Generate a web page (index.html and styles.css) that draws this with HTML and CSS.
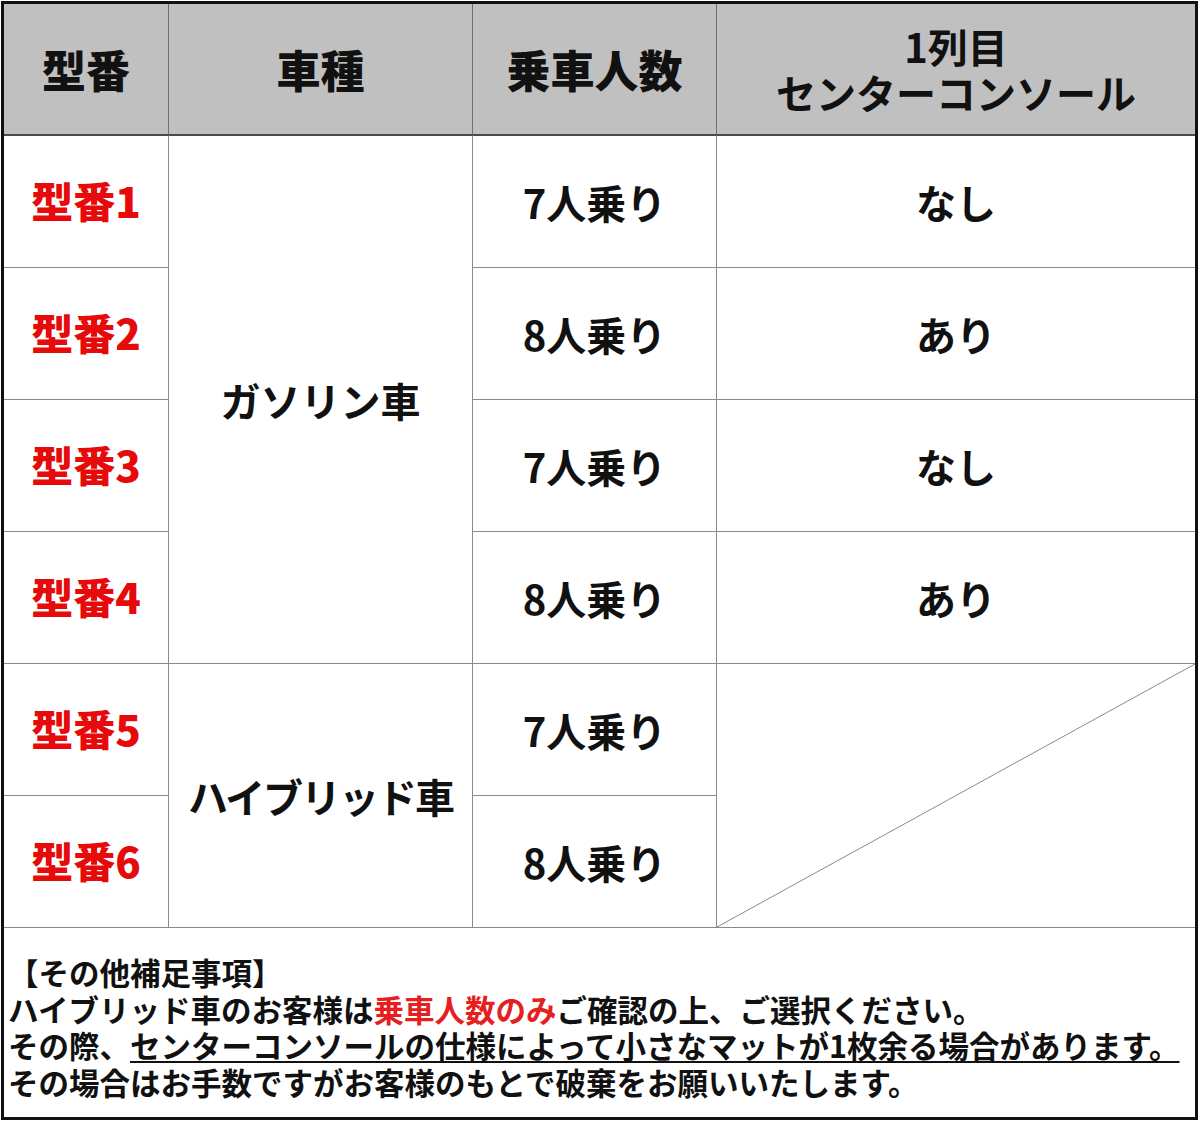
FILE: index.html
```html
<!DOCTYPE html>
<html lang="ja">
<head>
<meta charset="utf-8">
<title>型番一覧</title>
<link rel="stylesheet" href="styles.css">
</head>
<body>
<div class="sheet">
  <div class="grid">
    <div class="cell head heavy">型番</div>
    <div class="cell head heavy">車種</div>
    <div class="cell head heavy">乗車人数</div>
    <div class="cell head last two-line"><span>1列目</span><span>センターコンソール</span></div>

    <div class="cell model">型番1</div>
    <div class="cell type span4">ガソリン車</div>
    <div class="cell seat">7人乗り</div>
    <div class="cell seat last">なし</div>

    <div class="cell model">型番2</div>
    <div class="cell seat">8人乗り</div>
    <div class="cell seat last">あり</div>

    <div class="cell model">型番3</div>
    <div class="cell seat">7人乗り</div>
    <div class="cell seat last">なし</div>

    <div class="cell model">型番4</div>
    <div class="cell seat">8人乗り</div>
    <div class="cell seat last">あり</div>

    <div class="cell model">型番5</div>
    <div class="cell type span2 hybrid">ハイブリッド車</div>
    <div class="cell seat">7人乗り</div>
    <div class="cell last span2 diag">
      <svg class="diag-line" viewBox="0 0 100 100" preserveAspectRatio="none" aria-hidden="true">
        <line x1="0" y1="100" x2="100" y2="0" stroke="#8a8a8a" stroke-width="1" vector-effect="non-scaling-stroke"/>
      </svg>
    </div>

    <div class="cell model">型番6</div>
    <div class="cell seat">8人乗り</div>

    <div class="notes">
      <p>【その他補足事項】</p>
      <p>ハイブリッド車のお客様は<span class="red">乗車人数のみ</span>ご確認の上、ご選択ください。</p>
      <p>その際、<span class="ul">センターコンソールの仕様によって小さなマットが1枚余る場合があります。</span></p>
      <p>その場合はお手数ですがお客様のもとで破棄をお願いいたします。</p>
    </div>
  </div>
</div>
</body>
</html>
```

FILE: styles.css
```css
html, body {
  margin: 0;
  padding: 0;
  background: #ffffff;
}

body {
  font-family: "Noto Sans CJK JP", "Noto Sans", sans-serif;
  color: #111111;
}

.sheet {
  margin: 1px 0 0 1px;
  width: 1191px;
  height: 1113px;
  border: 3px solid #111111;
}

.grid {
  display: grid;
  grid-template-columns: 165px 304px 244px 1fr;
  grid-template-rows: 132px repeat(6, 132px) 1fr;
  height: 100%;
}

.cell {
  box-sizing: border-box;
  border-right: 1px solid #8a8a8a;
  border-bottom: 1px solid #8a8a8a;
  display: flex;
  align-items: center;
  justify-content: center;
  text-align: center;
  font-size: 40px;
  font-weight: 700;
  line-height: 1.2;
}

.cell.last {
  border-right: none;
}

.head {
  background: #c0c0c0;
  border-bottom: 2px solid #4a4a4a;
  border-right-color: #6f6f6f;
}

.heavy {
  font-size: 44px;
  font-weight: 900;
}

.two-line {
  flex-direction: column;
  font-size: 40px;
  font-weight: 700;
  line-height: 46px;
}

.two-line span {
  display: block;
  height: 46px;
}

.model {
  color: #e60a0a;
  font-size: 42px;
  font-weight: 900;
  padding-bottom: 2px;
}

.type {
  font-weight: 700;
}

.hybrid {
  letter-spacing: -2px;
}

.span4 {
  grid-row: span 4;
}

.span2 {
  grid-row: span 2;
}

.diag {
  padding: 0;
  align-items: stretch;
  justify-content: stretch;
}

.diag-line {
  display: block;
  width: 100%;
  height: 100%;
}

.notes {
  grid-column: 1 / -1;
  padding: 26px 0 0 4px;
  font-size: 30.5px;
  font-weight: 700;
  line-height: 36.5px;
  color: #111111;
}

.notes p {
  margin: 0;
  height: 36.5px;
  white-space: nowrap;
}

.red {
  color: #e5201f;
}

.ul {
  text-decoration: underline;
  text-decoration-thickness: 2px;
  text-underline-offset: 3px;
}
```
